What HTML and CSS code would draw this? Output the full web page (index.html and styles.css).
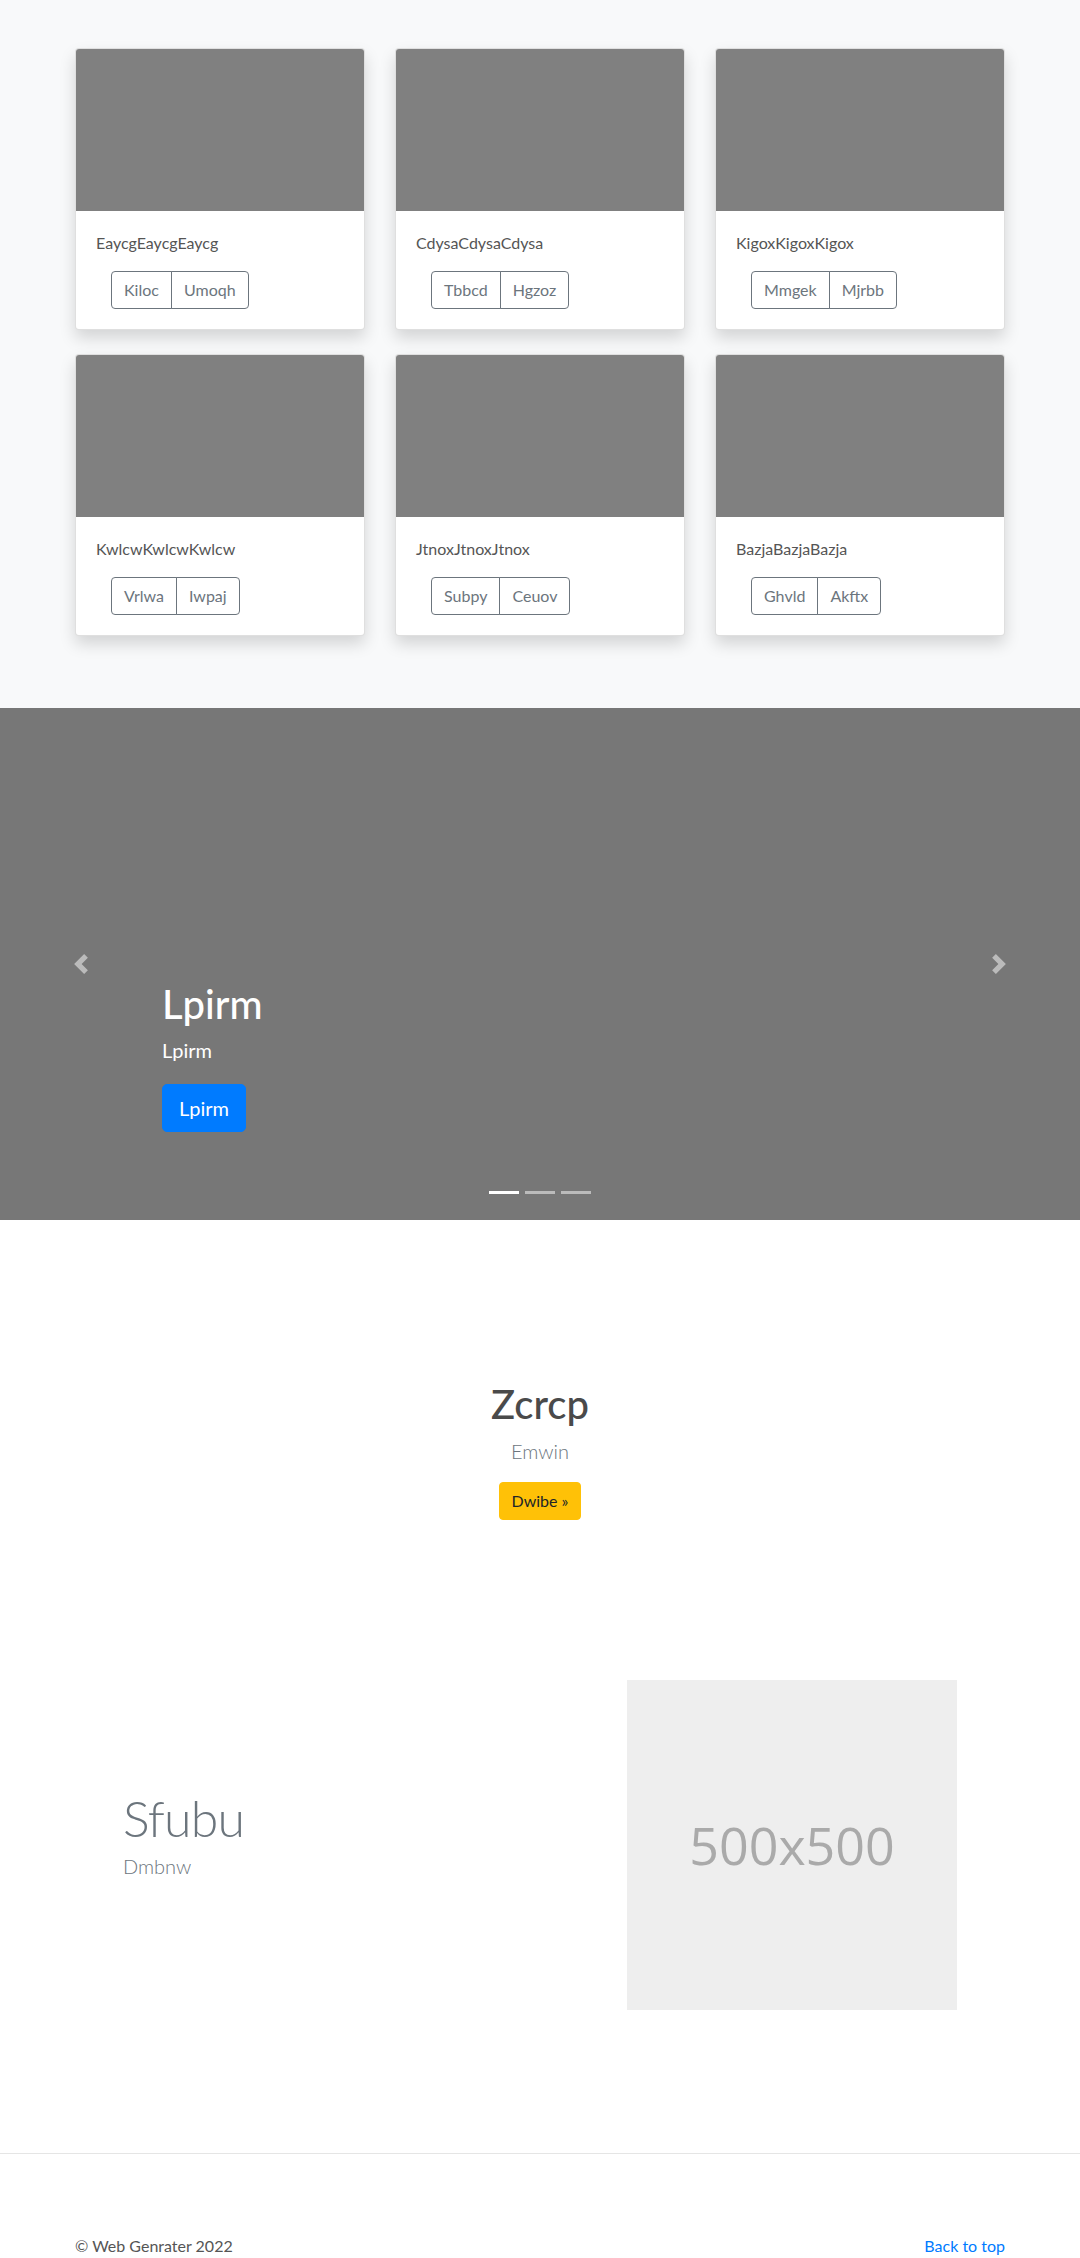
FILE: index.html
```html
<!DOCTYPE html>
<html lang="en">
<head>
<meta charset="utf-8">
<title>Web Genrater</title>
<link rel="stylesheet" href="styles.css">
</head>
<body>
<main>
  <section class="album">
    <div class="container">
      <div class="card-grid">
        <div class="card">
          <div class="card-img"></div>
          <div class="card-body">
            <p class="card-text">EaycgEaycgEaycg</p>
            <div class="btn-group">
              <button class="btn btn-outline">Kiloc</button>
              <button class="btn btn-outline">Umoqh</button>
            </div>
          </div>
        </div>
        <div class="card">
          <div class="card-img"></div>
          <div class="card-body">
            <p class="card-text">CdysaCdysaCdysa</p>
            <div class="btn-group">
              <button class="btn btn-outline">Tbbcd</button>
              <button class="btn btn-outline">Hgzoz</button>
            </div>
          </div>
        </div>
        <div class="card">
          <div class="card-img"></div>
          <div class="card-body">
            <p class="card-text">KigoxKigoxKigox</p>
            <div class="btn-group">
              <button class="btn btn-outline">Mmgek</button>
              <button class="btn btn-outline">Mjrbb</button>
            </div>
          </div>
        </div>
        <div class="card">
          <div class="card-img"></div>
          <div class="card-body">
            <p class="card-text">KwlcwKwlcwKwlcw</p>
            <div class="btn-group">
              <button class="btn btn-outline">Vrlwa</button>
              <button class="btn btn-outline">Iwpaj</button>
            </div>
          </div>
        </div>
        <div class="card">
          <div class="card-img"></div>
          <div class="card-body">
            <p class="card-text">JtnoxJtnoxJtnox</p>
            <div class="btn-group">
              <button class="btn btn-outline">Subpy</button>
              <button class="btn btn-outline">Ceuov</button>
            </div>
          </div>
        </div>
        <div class="card">
          <div class="card-img"></div>
          <div class="card-body">
            <p class="card-text">BazjaBazjaBazja</p>
            <div class="btn-group">
              <button class="btn btn-outline">Ghvld</button>
              <button class="btn btn-outline">Akftx</button>
            </div>
          </div>
        </div>
      </div>
    </div>
  </section>

  <section class="carousel">
    <ol class="indicators">
      <li class="active"></li>
      <li></li>
      <li></li>
    </ol>
    <div class="carousel-item">
      <div class="caption">
        <h1>Lpirm</h1>
        <p>Lpirm</p>
        <p class="btn-line-left"><a class="btn btn-lg btn-primary" href="#">Lpirm</a></p>
      </div>
    </div>
    <a class="control prev" href="#" aria-label="Previous">
      <svg viewBox="0 0 8 8" fill="#fff"><path d="M5.25 0l-4 4 4 4 1.5-1.5L4.25 4l2.5-2.5L5.25 0z"/></svg>
    </a>
    <a class="control next" href="#" aria-label="Next">
      <svg viewBox="0 0 8 8" fill="#fff"><path d="M2.75 0l-1.5 1.5L3.75 4l-2.5 2.5L2.75 8l4-4-4-4z"/></svg>
    </a>
  </section>

  <section class="jumbotron">
    <h1>Zcrcp</h1>
    <p class="lead muted">Emwin</p>
    <p class="btn-line"><a class="btn btn-warning" href="#">Dwibe &raquo;</a></p>
  </section>

  <section class="featurette">
    <div class="feat-text">
      <h2 class="featurette-heading">Sfubu</h2>
      <p class="lead muted">Dmbnw</p>
    </div>
    <div class="feat-media">
      <div class="placeholder">500x500</div>
    </div>
  </section>

  <hr class="divider">
</main>

<footer class="container footer">
  <p>&copy; Web Genrater 2022</p>
  <p><a href="#">Back to top</a></p>
</footer>
</body>
</html>
```

FILE: styles.css
```css
* { box-sizing: border-box; }

html, body { margin: 0; padding: 0; }

body {
  font-family: "Lato", "Liberation Sans", sans-serif;
  font-size: 16px;
  line-height: 1.5;
  color: #555;
  background: #fff;
}

p, h1, h2 { margin: 0; }

a { color: #007bff; text-decoration: none; }

.container {
  width: 960px;
  margin: 0 auto;
  padding: 0 15px;
}

/* Album */
.album {
  background: #f8f9fa;
  padding: 48px 0;
}

.card-grid {
  display: grid;
  grid-template-columns: repeat(3, 1fr);
  column-gap: 30px;
  row-gap: 24px;
  padding-bottom: 24px;
}

.card {
  background: #fff;
  border: 1px solid rgba(0, 0, 0, 0.125);
  border-radius: 4px;
  box-shadow: 0 8px 16px rgba(0, 0, 0, 0.15);
  overflow: hidden;
}

.card-img {
  height: 162px;
  background: #808080;
}

.card-body { padding: 20px; }

.card-text {
  margin-bottom: 16px;
  color: #555;
}

.btn {
  display: inline-block;
  font-family: inherit;
  font-size: 16px;
  line-height: 24px;
  padding: 6px 12px;
  border: 1px solid transparent;
  border-radius: 4px;
  background: transparent;
  text-decoration: none;
  white-space: nowrap;
  cursor: pointer;
}

.btn-group {
  display: inline-flex;
  margin-left: 15px;
}

.btn-outline {
  color: #6c757d;
  border-color: #6c757d;
}

.btn-group .btn:first-child {
  border-top-right-radius: 0;
  border-bottom-right-radius: 0;
}

.btn-group .btn + .btn {
  margin-left: -1px;
  border-top-left-radius: 0;
  border-bottom-left-radius: 0;
}

/* Carousel */
.carousel {
  position: relative;
  height: 512px;
  background: #777;
  margin-bottom: 64px;
}

.carousel-item {
  height: 512px;
  display: flex;
  align-items: flex-end;
  padding: 0 15% 48px;
}

.caption {
  width: 100%;
  padding: 20px 0;
  color: #fff;
  text-align: left;
}

.caption h1 {
  font-size: 40px;
  line-height: 48px;
  font-weight: 500;
  margin-bottom: 8px;
}

.caption p {
  font-size: 20px;
  line-height: 28px;
  margin-bottom: 20px;
}

.caption .btn-line-left { display: flex; }

.btn-lg {
  font-size: 20px;
  line-height: 30px;
  padding: 8px 16px;
  border-radius: 5px;
}

.btn-primary {
  background: #007bff;
  border-color: #007bff;
  color: #fff;
}

.control {
  position: absolute;
  top: 0;
  bottom: 0;
  width: 15%;
  display: flex;
  align-items: center;
  justify-content: center;
  opacity: 0.5;
}

.control svg {
  width: 20px;
  height: 20px;
  display: block;
}

.prev { left: 0; }
.next { right: 0; }

.indicators {
  position: absolute;
  left: 15%;
  right: 15%;
  bottom: 0;
  margin: 0 0 16px;
  padding: 0;
  list-style: none;
  display: flex;
  justify-content: center;
  z-index: 2;
}

.indicators li {
  width: 30px;
  height: 3px;
  margin: 10px 3px;
  background: #fff;
  opacity: 0.5;
}

.indicators li.active { opacity: 1; }

/* Jumbotron */
.jumbotron {
  padding: 96px 0;
  text-align: center;
}

.jumbotron h1 {
  font-size: 40px;
  line-height: 48px;
  font-weight: 500;
  color: #4a4a4a;
  margin-bottom: 8px;
}

.lead {
  font-size: 20px;
  line-height: 30px;
  font-weight: 300;
}

.muted { color: #6c757d; }

.jumbotron .lead { margin-bottom: 16px; }

.btn-line {
  display: flex;
  justify-content: center;
}

.btn-warning {
  background: #ffc107;
  border-color: #ffc107;
  color: #212529;
}

/* Featurette */
.featurette {
  width: 864px;
  margin: 64px auto 0;
  display: grid;
  grid-template-columns: 7fr 5fr;
  align-items: center;
}

.feat-text, .feat-media { padding: 0 15px; }

.featurette-heading {
  font-size: 50px;
  line-height: 1;
  font-weight: 300;
  letter-spacing: -0.8px;
  color: #6c757d;
  margin-bottom: 8px;
}

.featurette .lead { margin-bottom: 16px; }

.placeholder {
  width: 100%;
  aspect-ratio: 1 / 1;
  background: #eee;
  color: #aaa;
  font-family: "Open Sans", "Liberation Sans", sans-serif;
  font-size: 52px;
  line-height: 1;
  display: flex;
  align-items: center;
  justify-content: center;
}

.divider {
  height: 0;
  border: 0;
  border-top: 1px solid rgba(0, 0, 0, 0.1);
  margin: 143px 0 80px;
}

/* Footer */
.footer {
  display: flex;
  justify-content: space-between;
}

.footer p { margin-bottom: 16px; }
```
